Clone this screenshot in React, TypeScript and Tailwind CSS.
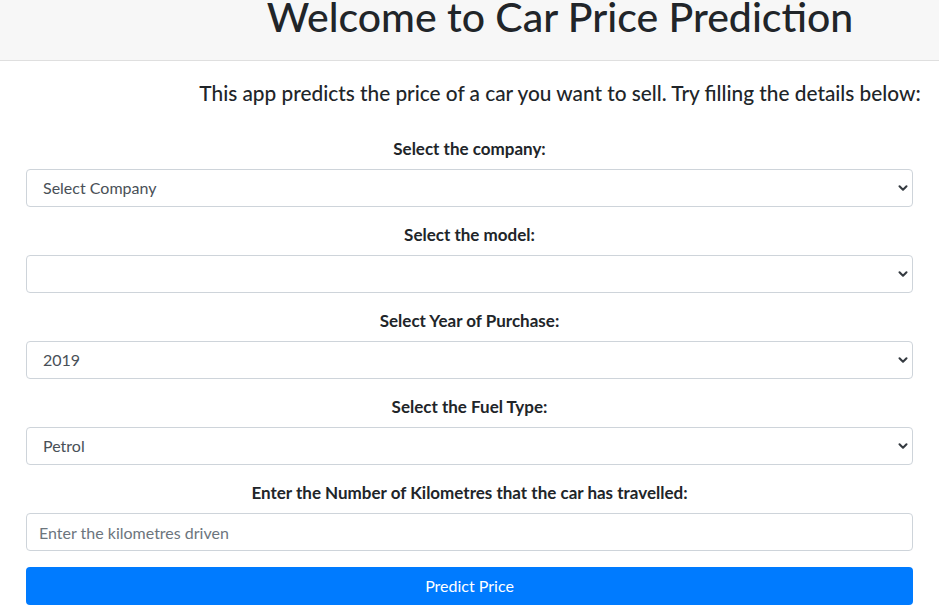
import { ChevronDown } from "lucide-react";

type Field = {
  label: string;
  kind: "select" | "input";
  value?: string;
  placeholder?: string;
};

const fields: Field[] = [
  { label: "Select the company:", kind: "select", value: "Select Company" },
  { label: "Select the model:", kind: "select", value: "" },
  { label: "Select Year of Purchase:", kind: "select", value: "2019" },
  { label: "Select the Fuel Type:", kind: "select", value: "Petrol" },
  {
    label: "Enter the Number of Kilometres that the car has travelled:",
    kind: "input",
    placeholder: "Enter the kilometres driven",
  },
];

export default function App() {
  return (
    <div
      className="w-full h-[609px] overflow-hidden bg-white text-[#212529]"
      style={{ fontFamily: "Lato, 'Noto Sans', sans-serif" }}
    >
      <div className="h-[61px] bg-[#f7f7f7] border-b border-[#dfdfdf] overflow-hidden">
        <div className="w-[1120px] text-center">
          <h1 className="text-[41px] leading-[48px] font-medium mt-[-7px]">
            Welcome to Car Price Prediction
          </h1>
        </div>
      </div>

      <div className="w-[1120px] text-center mt-[20px]">
        <h5 className="text-[20.8px] leading-[24px] font-medium">
          This app predicts the price of a car you want to sell. Try filling the details below:
        </h5>
      </div>

      <form className="px-[26px] mt-[32px] flex flex-col gap-4">
        {fields.map((f) => (
          <div key={f.label} className="flex flex-col">
            <label className="text-center font-bold text-[17px] leading-[24px] mb-2">
              {f.label}
            </label>
            {f.kind === "select" ? (
              <div className="relative h-[38px] border border-[#ced4da] rounded-[4px] bg-white flex items-center pl-4 text-[16px] text-[#495057]">
                <span>{f.value}</span>
                <ChevronDown
                  className="absolute right-[2px] top-1/2 -translate-y-1/2 text-[#343a40]"
                  size={14}
                  strokeWidth={3.5}
                />
              </div>
            ) : (
              <input
                className="h-[38px] border border-[#ced4da] rounded-[4px] px-3 text-[16px] text-[#495057] placeholder:text-[#6c757d] outline-none"
                placeholder={f.placeholder}
              />
            )}
          </div>
        ))}
        <button
          type="button"
          className="h-[38px] bg-[#007bff] text-white rounded-[4px] text-[16px]"
        >
          Predict Price
        </button>
      </form>
    </div>
  );
}
